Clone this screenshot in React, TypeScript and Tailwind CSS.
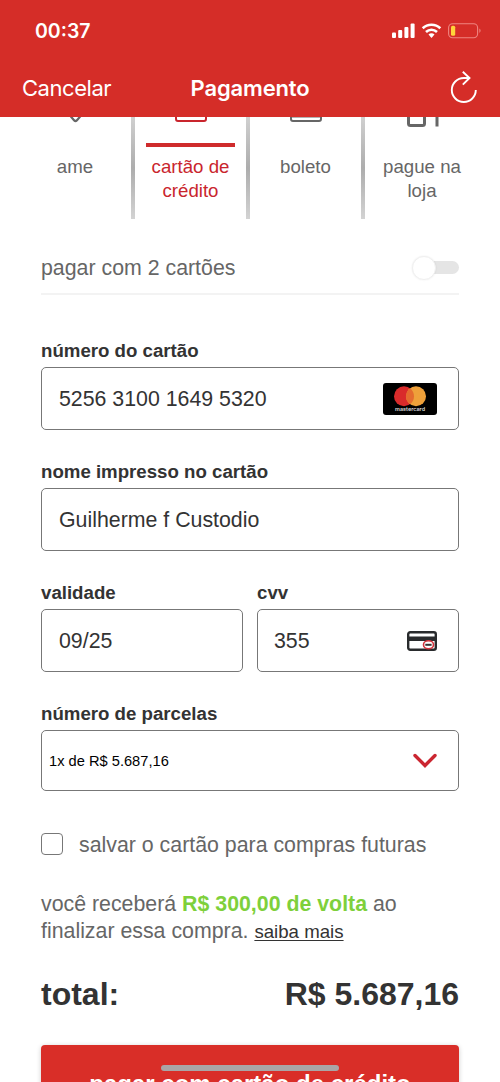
import type { ReactNode } from "react";

const tabs = [
  { id: "ame", label: "ame", width: "w-[112px]" },
  { id: "credito", label: "cartão de crédito", width: "w-[111px]" },
  { id: "boleto", label: "boleto", width: "w-[111px]" },
  { id: "loja", label: "pague na loja", width: "w-[114px]" },
];

const TabIcon = ({ id }: { id: string }) => {
  if (id === "ame")
    return (
      <svg className="w-8 h-8" viewBox="0 0 32 32" fill="none" stroke="#666" strokeWidth="2.2">
        <path d="M11 -1.5 L15.2 3.4 Q16.5 4.6 17.8 3.4 L22 -1.5" />
      </svg>
    );
  if (id === "loja")
    return (
      <svg className="w-9 h-8" viewBox="0 0 36 32" fill="none" stroke="#666" strokeWidth="3">
        <path d="M4.5 -4 V6.5 Q4.5 8.5 6.5 8.5 H18.5 Q20.5 8.5 20.5 6.5 V-4 M33 -4 V9.5" />
      </svg>
    );
  return (
    <svg className="w-8 h-8" viewBox="0 0 32 32" fill="none" stroke={id === "credito" ? "#c9252d" : "#666"} strokeWidth="2">
      <rect x="1" y="-16" width="30" height="20" rx="2" />
      {id === "boleto" && <path d="M2 0.5 H30" strokeWidth="1" strokeOpacity="0.5" />}
    </svg>
  );
};

const Field = ({ label, children, className = "h-[63px] pt-[2px]" }: { label: string; children: ReactNode; className?: string }) => (
  <div className="flex-1">
    <div className="h-6 pt-px leading-6 text-[18.67px] font-bold text-[#333] whitespace-nowrap">{label}</div>
    <div className={`mt-[5px] flex items-center justify-between rounded-[5px] border border-[#777] pl-[17px] pr-[21px] text-[21.33px] text-[#333] ${className}`}>
      {children}
    </div>
  </div>
);

const Mastercard = () => (
  <svg className="-mt-[2px] w-[54px] h-[32px]" viewBox="0 0 54 32">
    <rect width="54" height="32" rx="3" fill="#000" />
    <circle cx="21" cy="13.3" r="10" fill="#d92b2b" />
    <circle cx="33" cy="13.3" r="10" fill="#eea03a" />
    <path d="M27 5.3 A10 10 0 0 1 27 21.3 A10 10 0 0 1 27 5.3" fill="#e46b2f" />
    <text x="27" y="28.2" textAnchor="middle" fontSize="5.4" fontFamily="Inter, sans-serif" fontWeight="600" textLength="30" fill="#ddd">
      mastercard
    </text>
  </svg>
);

const CvvIcon = () => (
  <svg className="-mt-[2px] w-[30px] h-5" viewBox="0 0 30 20" fill="none">
    <rect x="1.2" y="1.2" width="27.6" height="17.6" rx="2" stroke="#292b2d" strokeWidth="2.4" />
    <rect x="1" y="5.5" width="28" height="4.5" fill="#292b2d" />
    <ellipse cx="21.5" cy="13.8" rx="5" ry="4" fill="#fff" stroke="#d3323b" strokeWidth="1.6" />
    <path d="M18.3 13.8 H24.6" stroke="#333" strokeWidth="2" />
  </svg>
);

const StatusIcons = () => (
  <svg className="w-[92px] h-4" viewBox="0 0 92 16" fill="none">
    <g fill="#fff">
      <rect x="1" y="9.5" width="4" height="5.5" rx="1" />
      <rect x="7.2" y="7" width="4" height="8" rx="1" />
      <rect x="13.4" y="4" width="4" height="11" rx="1" />
      <rect x="19.6" y="0.5" width="4" height="14.5" rx="1" />
      <path d="M40.5 10.2 a4.3 4.3 0 0 1 3 1.3 L40.5 15 l-3 -3.5 a4.3 4.3 0 0 1 3 -1.3z" />
    </g>
    <path d="M31.7 5.3 a12.6 12.6 0 0 1 17.6 0 M35 9 a8 8 0 0 1 11 0" stroke="#fff" strokeWidth="2.6" />
    <rect x="57.6" y="0.7" width="29" height="14" rx="4" stroke="#ef8580" strokeWidth="1.1" />
    <rect x="60" y="2.7" width="4.2" height="10" rx="1.5" fill="#ffd43b" />
    <path d="M88.4 5.5 q2.4 2.2 0 4.4z" fill="#ef8580" />
  </svg>
);

const App = () => {
  return (
    <div className="relative flex h-[1082px] w-[500px] flex-col overflow-hidden bg-white font-['Liberation_Sans',Arial,sans-serif] text-[#666]">
      {/* Header */}
      <header className="h-[117px] shrink-0 bg-[#d52d28] font-['Inter',sans-serif] text-white">
        <div className="flex h-[60px] items-center justify-between pl-[35px] pr-[17px] pt-[2px]">
          <span className="pt-px text-[19.5px] font-semibold">00:37</span>
          <StatusIcons />
        </div>
        <div className="grid h-[57px] grid-cols-3 items-center pl-[22px] pr-[22px]">
          <span className="text-[22px] tracking-[-0.45px]">Cancelar</span>
          <span className="text-center text-[22px] font-semibold tracking-[-0.15px]">Pagamento</span>
          <svg className="-mt-[3px] h-[34px] w-[28px] justify-self-end" viewBox="0 0 28 34" fill="none" stroke="#fff" strokeWidth="1.9">
            <path d="M25.8 20 A12 12 0 1 1 13.8 8 H19.5 M12.8 1.8 L19.5 8 L12.8 14.6" />
          </svg>
        </div>
      </header>

      {/* Payment methods */}
      <nav className="flex h-[102px] shrink-0 pl-[19px] text-center text-[18.67px] leading-6">
        {tabs.map(({ id, label, width }, i) => (
          <div key={id} className="flex">
            {i > 0 && <div className="w-1 bg-gradient-to-b from-[#d0d0d0] via-[#adadad] to-[#d3d3d3]" />}
            <div className={`flex flex-col items-center ${width} ${id === "credito" ? "text-[#c9252d]" : ""}`}>
              <div className="flex h-[26px] items-start">
                <TabIcon id={id} />
              </div>
              <div className={`h-1 w-[89px] shrink-0 ${id === "credito" ? "bg-[#cf2b2c]" : ""}`} />
              <span className="mt-[8px] w-[90px]">{label}</span>
            </div>
          </div>
        ))}
      </nav>

      <main className="px-[41px]">
        <div className="mt-[20px] flex h-[56px] items-center justify-between border-b-2 border-[#f3f3f3] text-[21.33px]">
          <span className="pt-[5px]">pagar com 2 cartões</span>
          <div className="relative mt-[2px] h-[13px] w-[38px] rounded-full bg-[#e5e5e5]">
            <div className="absolute -left-[9px] -top-[5px] h-6 w-6 rounded-full border border-[#f0f0f0] bg-white shadow-[0_0_2px_rgba(0,0,0,0.08)]" />
          </div>
        </div>

        <div className="mt-[43px] flex flex-col gap-[29px]">
          <Field label="número do cartão">
            <span>5256 3100 1649 5320</span>
            <Mastercard />
          </Field>
          <Field label="nome impresso no cartão">
            <span>Guilherme f Custodio</span>
          </Field>
          <div className="flex gap-[14px]">
            <Field label="validade">
              <span>09/25</span>
            </Field>
            <Field label="cvv">
              <span className="-ml-px">355</span>
              <CvvIcon />
            </Field>
          </div>
          <Field label="número de parcelas" className="h-[61px]">
            <span className="-ml-[10px] text-[14.67px] text-black">1x de R$ 5.687,16</span>
            <svg className="h-4 w-6" viewBox="0 0 24 16" fill="none" stroke="#cb2631" strokeWidth="3.4" strokeLinecap="round">
              <path d="M2 2.5 L12 12.5 L22 2.5" />
            </svg>
          </Field>
        </div>

        <div className="mt-[42px] flex h-[22px] items-center text-[21.33px]">
          <div className="h-[22px] w-[22px] rounded-[4px] border-[1.5px] border-[#777]" />
          <span className="ml-[16px] pt-[3px] whitespace-nowrap">salvar o cartão para compras futuras</span>
        </div>

        <p className="mt-[36px] text-[21.33px] leading-[27px]">
          você receberá <b className="text-[#7ed03b]">R$ 300,00 de volta</b> ao
          <br />
          finalizar essa compra.{" "}
          <a className="text-[18.67px] text-[#333] underline underline-offset-[2px]">saiba mais</a>
        </p>

        <div className="mt-[30px] flex h-[38px] items-center justify-between text-[32px] font-bold text-[#333]">
          <span>total:</span>
          <span>R$ 5.687,16</span>
        </div>

        <div className="mt-[32px] h-[75px] rounded-[4px] bg-[#d92e28] pt-[25px] text-center text-[24px] font-bold leading-[27px] text-white shadow-[0_1px_5px_rgba(0,0,0,0.2)]">
          pagar com cartão de crédito
        </div>
      </main>

      {/* Home indicator */}
      <div className="absolute left-[161px] top-[1065px] h-[6px] w-[178px] rounded-full bg-[#aaa5a6]" />
    </div>
  );
};

export default App;
